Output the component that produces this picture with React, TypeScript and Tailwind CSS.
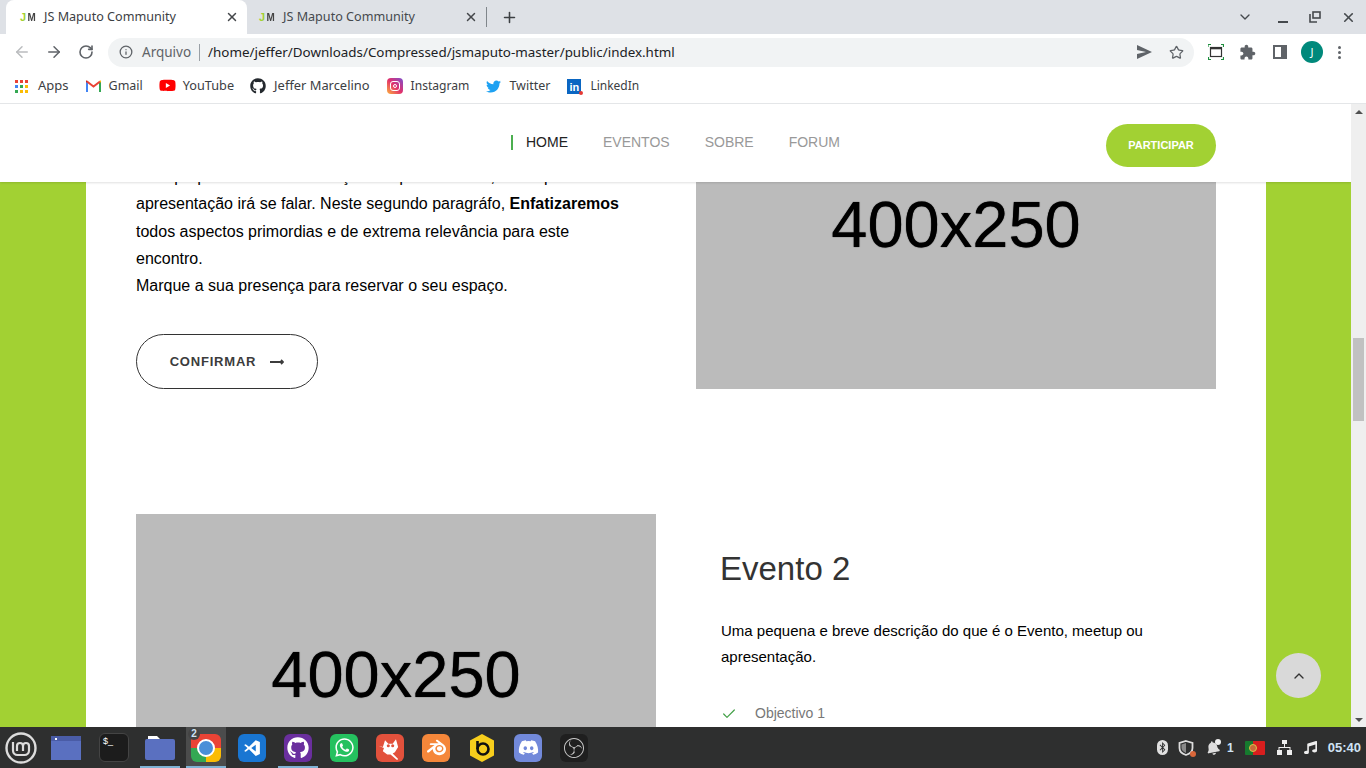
import { ArrowLeft, ArrowRight, RotateCw, Info, Star, ChevronDown, ChevronUp, X, Plus, Check } from "lucide-react";
import { FaGithub, FaYoutube, FaTwitter, FaWhatsapp, FaDiscord, FaBluetoothB, FaBell, FaMusic } from "react-icons/fa";
import { SiBlender, SiObsstudio } from "react-icons/si";

const sans = "font-['Liberation_Sans',Arial,sans-serif]";

function Favicon() {
  return (
    <span className={`flex w-4 shrink-0 gap-[1px] text-[11px] font-bold leading-none ${sans}`}>
      <span className="text-[#a2d133]">J</span>
      <span className="scale-x-90 text-[#444]">M</span>
    </span>
  );
}

function Tab({ active }: { active?: boolean }) {
  return (
    <div className={`flex h-[34px] w-[241px] items-center pl-[14px] pr-[8px] ${active ? "rounded-t-lg bg-white" : ""}`}>
      <Favicon />
      <span className={`ml-[8px] flex-1 text-[12.6px] ${active ? "text-[#3c4043]" : "text-[#45494d]"}`}>JS Maputo Community</span>
      <X size={14} strokeWidth={2.5} className="text-[#44474a]" />
    </div>
  );
}

function TabStrip() {
  return (
    <div className="flex h-[34px] items-center bg-[#dee1e6] pl-[6px] text-[#45494d]">
      <Tab active />
      <div className="-ml-[2px]"><Tab /></div>
      <div className="h-5 w-px bg-[#80868b]" />
      <Plus size={17} strokeWidth={2.2} className="ml-[14px] text-[#3c4043]" />
      <div className="flex-1" />
      <ChevronDown size={16} strokeWidth={2} className="mr-[25px]" />
      <span className="mr-[21px] mt-[9px] h-[2px] w-[10px] bg-[#45494d]" />
      <svg width="12" height="12" viewBox="0 0 12 12" className="mr-[20px]" fill="none" stroke="currentColor" strokeWidth="1.6">
        <rect x="4" y="1" width="7" height="6" />
        <path d="M1 3v8h7" />
      </svg>
      <X size={15} strokeWidth={2.6} className="mr-[10px]" />
    </div>
  );
}

function Toolbar() {
  return (
    <div className="flex h-[36px] items-center bg-white pl-[13px] text-[#5f6368]">
      <ArrowLeft size={18} className="text-[#babcbe]" />
      <ArrowRight size={18} className="ml-[14px]" />
      <RotateCw size={16} strokeWidth={2.4} className="ml-[15px]" />
      <div className="ml-[14px] flex h-[29px] w-[1086px] items-center rounded-full bg-[#f1f3f4] pl-[11px] pr-[10px]">
        <Info size={14} strokeWidth={2.2} />
        <span className="ml-[9px] text-[13.5px] text-[#5f6368]">Arquivo</span>
        <div className="mx-[8px] h-[17px] w-px bg-[#9aa0a6]" />
        <span className="flex-1 text-[13.4px] text-[#202124]">/home/jeffer/Downloads/Compressed/jsmaputo-master/public/index.html</span>
        <svg width="15" height="14" viewBox="0 0 15 14" className="mr-[17px]" fill="currentColor">
          <path d="M0 0l15 7-15 7V9l9-2-9-2z" />
        </svg>
        <Star size={15} strokeWidth={2} />
      </div>
      <svg width="16" height="16" viewBox="0 0 16 16" className="ml-[14px]" fill="none">
        <path d="M0 3V.5h3M13 .5h2.5V3M15.5 13v2.500H13M3 15.500H.5V13" stroke="#1e8e3e" strokeWidth="1.2" />
        <rect x="2.500" y="3.500" width="11" height="9" stroke="#333" strokeWidth="1.2" />
        <path d="M2.500 4.500h11" stroke="#333" strokeWidth="1.6" />
      </svg>
      <svg width="17" height="17" viewBox="0 0 24 24" className="ml-[15px]" fill="currentColor">
        <path d="M20.500 11H19V7c0-1.100-.9-2-2-2h-4V3.500C13 2.120 11.880 1 10.500 1S8 2.120 8 3.500V5H4c-1.100 0-1.990.9-1.990 2v3.800H3.500c1.490 0 2.700 1.210 2.700 2.700s-1.210 2.700-2.700 2.700H2V20c0 1.100.9 2 2 2h3.800v-1.500c0-1.490 1.210-2.700 2.700-2.700 1.490 0 2.700 1.210 2.700 2.700V22H17c1.100 0 2-.9 2-2v-4h1.500c1.380 0 2.500-1.120 2.500-2.500S21.880 11 20.500 11z" />
      </svg>
      <svg width="14" height="14" viewBox="0 0 14 14" className="ml-[17px]" fill="none">
        <rect x="1" y="1" width="12" height="12" stroke="currentColor" strokeWidth="2" />
        <rect x="8" y="1" width="5" height="12" fill="currentColor" />
      </svg>
      <div className="ml-[14px] flex h-[22px] w-[22px] items-center justify-center rounded-full bg-[#00897b] text-[11px] text-white">J</div>
      <div className="ml-[15px] flex flex-col gap-[2px]">
        <span className="h-[3px] w-[3px] rounded-full bg-[#5f6368]" />
        <span className="h-[3px] w-[3px] rounded-full bg-[#5f6368]" />
        <span className="h-[3px] w-[3px] rounded-full bg-[#5f6368]" />
      </div>
    </div>
  );
}

function AppsGrid() {
  const colors = ["#ea4335", "#ea4335", "#ea4335", "#4285f4", "#34a853", "#fbbc04", "#34a853", "#fbbc04", "#fbbc04"];
  return (
    <div className="grid w-[13px] grid-cols-3 gap-[2px]">
      {colors.map((c, i) => (
        <span key={i} className="h-[3px] w-[3px]" style={{ backgroundColor: c }} />
      ))}
    </div>
  );
}

function GmailIcon() {
  return (
    <svg width="15" height="12" viewBox="0 0 15 12" fill="none">
      <path d="M1 12V2" stroke="#4285f4" strokeWidth="2" />
      <path d="M14 12V2" stroke="#34a853" strokeWidth="2" />
      <path d="M1 1.500l6.500 5 6.500-5" stroke="#ea4335" strokeWidth="2" />
      <path d="M0 1l1 .8" stroke="#c5221f" strokeWidth="2" />
      <path d="M14 1.800l1-.8" stroke="#fbbc04" strokeWidth="2" />
    </svg>
  );
}

function InstagramIcon() {
  return (
    <div className="flex h-[16px] w-[16px] items-center justify-center rounded-[4px] bg-[linear-gradient(45deg,#fdb13c,#e1306c_50%,#7b4fd0)]">
      <div className="flex h-[10px] w-[10px] items-center justify-center rounded-[3px] border border-white">
        <span className="h-[4px] w-[4px] rounded-full border border-white" />
      </div>
    </div>
  );
}

function LinkedinIcon() {
  return (
    <div className={`relative flex h-[15px] w-[14px] items-end justify-center bg-[#0a66c2] text-[11px] font-bold leading-[13px] text-white ${sans}`}>
      in
      <span className="absolute -bottom-[1px] -right-[2px] h-[4px] w-[4px] rounded-full bg-[#e53935]" />
    </div>
  );
}

function Bookmarks() {
  return (
    <div className="flex h-[34px] items-center border-b border-[#e4e6e8] bg-white pb-[1px] pl-[15px] text-[12.5px] text-[#3c4043]">
      <div className="flex items-center gap-[10px]"><AppsGrid /><span className="text-[13px]">Apps</span></div>
      <div className="ml-[17px] flex items-center gap-[8px]"><GmailIcon /><span>Gmail</span></div>
      <div className="ml-[16px] flex items-center gap-[7px]"><FaYoutube size={17} className="text-[#ff0000]" /><span className="text-[12.7px]">YouTube</span></div>
      <div className="ml-[16px] flex items-center gap-[8px]"><FaGithub size={16} className="text-[#24292e]" /><span className="text-[12.9px]">Jeffer Marcelino</span></div>
      <div className="ml-[17px] flex items-center gap-[8px]"><InstagramIcon /><span className="text-[12.1px]">Instagram</span></div>
      <div className="ml-[17px] flex items-center gap-[8px]"><FaTwitter size={15} className="text-[#1da1f2]" /><span>Twitter</span></div>
      <div className="ml-[17px] flex items-center gap-[9px]"><LinkedinIcon /><span className="text-[12px]">LinkedIn</span></div>
    </div>
  );
}

function Placeholder() {
  return (
    <div className={`flex h-[325px] w-[520px] shrink-0 items-center justify-center bg-[#bbbbbb] text-[65px] text-black ${sans}`}>
      <span className="-mt-[4px] blur-[0.6px] [text-shadow:0_0_1px_#000]">400x250</span>
    </div>
  );
}

function NavHeader() {
  return (
    <div className={`absolute left-0 right-0 top-0 flex h-[78px] items-center bg-white shadow-[0_1px_2px_rgba(0,0,0,0.12)] ${sans}`}>
      <nav className="ml-[511px] flex items-center gap-[35px] pb-[1px] text-[14px] leading-[15px] text-[#999]">
        <span className="border-l-2 border-[#4caf50] pl-[13px] text-[#222]">HOME</span>
        <span>EVENTOS</span>
        <span>SOBRE</span>
        <span>FORUM</span>
      </nav>
      <button className="absolute left-[1106px] top-[20px] h-[43px] w-[110px] rounded-full bg-[#a2d133] text-[11px] font-bold text-white">PARTICIPAR</button>
    </div>
  );
}

function Content() {
  return (
    <div className={`ml-[86px] mr-[85px] -mt-[40px] h-[800px] bg-white px-[50px] ${sans}`}>
      <div className="flex justify-between">
        <div className="w-[500px] pt-[99.2px] text-[16px] leading-[27.2px] text-black">
          <p>
            Uma pequena e breve descrição do que é o Tema, meetup ou apresentação irá se falar. Neste segundo paragráfo, <b>Enfatizaremos</b> todos aspectos primordias e de extrema relevância para este encontro.<br />
            Marque a sua presença para reservar o seu espaço.
          </p>
          <button className="mt-[34.8px] flex h-[55px] w-[182px] items-center justify-center gap-[14px] rounded-full border border-[#333] bg-white text-[13px] font-bold tracking-[0.8px] text-[#3c3c3c]">
            CONFIRMAR
            <svg width="14" height="8" viewBox="0 0 14 8" fill="none" stroke="currentColor" strokeWidth="1.8">
              <path d="M0 4h13M11 2l2 2-2 2" />
            </svg>
          </button>
        </div>
        <Placeholder />
      </div>
      <div className="mt-[125px] flex">
        <Placeholder />
        <div className="ml-[65px] w-[440px]">
          <h2 className="-ml-[1px] mt-[35px] text-[33px] leading-[40px] text-[#333]">Evento 2</h2>
          <p className="mt-[29px] text-[15px] leading-[25.5px] text-black">
            Uma pequena e breve descrição do que é o Evento, meetup ou apresentação.
          </p>
          <div className="mt-[34px] flex items-center text-[14px] text-[#777]">
            <Check size={16} strokeWidth={1.8} className="text-[#43a047]" />
            <span className="ml-[18px]">Objectivo 1</span>
          </div>
        </div>
      </div>
    </div>
  );
}

function Scrollbar() {
  return (
    <div className="relative flex w-[15px] shrink-0 flex-col justify-between bg-[#efefef]">
      <div className="flex h-[15px] items-center justify-center">
        <span className="border-x-4 border-b-4 border-x-transparent border-b-[#505050]" />
      </div>
      <div className="absolute left-[2px] top-[234px] h-[83px] w-[11px] bg-[#c1c1c1]" />
      <div className="flex h-[15px] items-center justify-center">
        <span className="border-x-4 border-t-4 border-x-transparent border-t-[#505050]" />
      </div>
    </div>
  );
}

function Page() {
  return (
    <div className="flex h-[623px]">
      <div className="relative flex-1 overflow-hidden bg-[#a2d133]">
        <Content />
        <NavHeader />
        <div className="absolute left-[1276px] top-[549px] flex h-[45px] w-[45px] items-center justify-center rounded-full bg-[#d9d9d9] text-[#333]">
          <ChevronUp size={16} />
        </div>
      </div>
      <Scrollbar />
    </div>
  );
}

function Tile({ bg, children }: { bg: string; children?: React.ReactNode }) {
  return (
    <div className="flex h-[28px] w-[28px] items-center justify-center rounded-[6px] text-white" style={{ backgroundColor: bg }}>
      {children}
    </div>
  );
}

// one launcher slot of the panel, 40 wide with a 6 gap
function Dock({ children, mark, active }: { children?: React.ReactNode; mark?: boolean; active?: boolean }) {
  return (
    <div className={`relative flex h-[41px] w-[40px] shrink-0 items-center justify-center ${active ? "bg-[#4b4c4c]" : ""}`}>
      {children}
      {mark && <span className="absolute bottom-0 left-0 h-[2px] w-full bg-[#7fb3d5]" />}
    </div>
  );
}

function MintLogo() {
  return (
    <svg width="32" height="32" viewBox="0 0 32 32" fill="none" stroke="#dcdcdc">
      <circle cx="16" cy="16" r="14.500" strokeWidth="2.400" />
      <path d="M8 10v8.500a4.500 4.500 0 0 0 4.500 4.500h7a4.500 4.500 0 0 0 4.500-4.500V14a3 3 0 0 0-6 0v5M18 14a3 3 0 0 0-6 0v5" strokeWidth="2.200" />
    </svg>
  );
}

function WindowsIcon() {
  return (
    <svg width="30" height="24" viewBox="0 0 30 24" className="-ml-[4px]">
      <rect width="30" height="24" fill="#5a70c0" />
      <rect width="30" height="5" fill="#4a5ca6" />
      <rect x="4" y="2" width="2" height="2" fill="#fff" />
    </svg>
  );
}

function FolderIcon() {
  return (
    <svg width="30" height="24" viewBox="0 0 30 24">
      <path d="M3 0h9l3 3H3z" fill="#fff" />
      <path d="M0 5a2 2 0 0 1 2-2h26a2 2 0 0 1 2 2v17a2 2 0 0 1-2 2H2a2 2 0 0 1-2-2z" fill="#5a70c0" />
    </svg>
  );
}

function ChromeIcon() {
  return (
    <div className="relative h-[28px] w-[30px] overflow-hidden rounded-[6px] bg-[conic-gradient(#ea4335_0_25%,#fbbc04_25%_50%,#34a853_50%_75%,#ea4335_75%)]">
      <span className="absolute left-[6px] top-[5px] h-[18px] w-[18px] rounded-full border-2 border-white bg-[#4a8fd8]" />
    </div>
  );
}

function VscodeIcon() {
  return (
    <svg width="18" height="18" viewBox="0 0 24 24" fill="#fff">
      <path d="M17 1.500L8 10.300 3.600 7 1.500 8.100 6 12l-4.500 3.900L3.600 17 8 13.700l9 8.800 5.500-2.400V3.900zM17 7.500v9L11 12z" fillRule="evenodd" />
    </svg>
  );
}

function GimpIcon() {
  return (
    <svg width="25" height="24" viewBox="0 0 22 22" fill="#fff">
      <path d="M0 9l4 1 2-6 3 3h4l3-4 2 7-3 5-2 1 5 5-1 1-6-5H8l-4-3 1-3z" />
      <circle cx="9" cy="9" r="1.400" fill="#e2513c" />
      <circle cx="13" cy="9" r="1.400" fill="#e2513c" />
    </svg>
  );
}

function BeeIcon() {
  return (
    <svg width="26" height="28" viewBox="0 0 26 28">
      <path d="M13 0l12 6.500v15L13 28 1 21.500v-15z" fill="#f7ce1c" />
      <circle cx="14" cy="15" r="5.500" fill="none" stroke="#111" strokeWidth="2.600" />
      <path d="M8.500 7v8" stroke="#111" strokeWidth="2.600" />
    </svg>
  );
}

function ShieldIcon() {
  return (
    <div className="relative">
      <svg width="16" height="16" viewBox="0 0 16 16" fill="none">
        <path d="M8 1l6.500 2v5c0 3.500-3 6-6.500 7-3.500-1-6.500-3.500-6.500-7V3z" stroke="#ddd" strokeWidth="1.800" />
        <path d="M8 3v10c-2.500-1-4.500-2.800-4.500-5V4.500z" fill="#888" />
      </svg>
      <span className="absolute -bottom-[1px] -right-[2px] h-[6px] w-[6px] rounded-full bg-[#d9673a]" />
    </div>
  );
}

function NetworkIcon() {
  return (
    <svg width="15" height="15" viewBox="0 0 15 15" fill="#eee">
      <rect x="5" y="0" width="5" height="4" />
      <rect x="0" y="10" width="5" height="5" />
      <rect x="10" y="10" width="5" height="5" />
      <path d="M7 4h1v3h5.500v3h-1V8h-10v2h-1V7H7z" />
    </svg>
  );
}

function Taskbar() {
  return (
    <div className="flex h-[41px] items-center bg-[#2e2f2f] pl-[5px] text-white">
      <MintLogo />
      <div className="ml-[11px] flex gap-[6px]">
        <Dock><WindowsIcon /></Dock>
        <Dock>
          <div className="flex h-[29px] w-[30px] rounded-[6px] border border-[#444] bg-[#1c1c1c] pl-[3px] pt-[3px]">
            <span className={`text-[9px] leading-none ${sans}`}>$_</span>
          </div>
        </Dock>
        <Dock mark><FolderIcon /></Dock>
        <Dock mark active>
          <ChromeIcon />
          <span className={`absolute left-[2px] top-[1px] flex h-[12px] w-[12px] items-center justify-center rounded-full bg-[#444] text-[10px] font-bold leading-none text-[#cfe3f5] ${sans}`}>2</span>
        </Dock>
        <Dock><Tile bg="#1976d2"><VscodeIcon /></Tile></Dock>
        <Dock mark><Tile bg="#6a2f9e"><FaGithub size={22} /></Tile></Dock>
        <Dock><Tile bg="#25c15f"><FaWhatsapp size={21} /></Tile></Dock>
        <Dock><Tile bg="#e2513c"><GimpIcon /></Tile></Dock>
        <Dock><Tile bg="#f5873a"><SiBlender size={19} /></Tile></Dock>
        <Dock><BeeIcon /></Dock>
        <Dock><Tile bg="#7289da"><FaDiscord size={21} /></Tile></Dock>
        <Dock><Tile bg="#1f1f1f"><SiObsstudio size={20} className="text-[#ccc]" /></Tile></Dock>
      </div>
      <div className="flex-1" />
      <div className={`flex items-center pr-[5px] text-[12px] font-bold text-[#cfe3f5] ${sans}`}>
        <div className="flex h-[15px] w-[11px] items-center justify-center rounded-full bg-[#e0e0e0] text-[#2e2f2f]"><FaBluetoothB size={11} /></div>
        <div className="ml-[10px]"><ShieldIcon /></div>
        <div className="relative ml-[12px]">
          <FaBell size={14} className="-rotate-12 text-[#ddd]" />
          <span className="absolute -right-[1px] -top-[2px] h-[6px] w-[6px] rounded-full bg-[#eee]" />
        </div>
        <span className="ml-[7px]">1</span>
        <div className="relative ml-[11px] h-[14px] w-[20px] rounded-[1px] bg-[linear-gradient(90deg,#167a2e_40%,#d81e1e_40%)]">
          <span className="absolute left-[4px] top-[3px] h-[8px] w-[8px] rounded-full border border-[#d9c24a] bg-[#c86a3a]" />
        </div>
        <div className="ml-[12px]"><NetworkIcon /></div>
        <FaMusic size={13} className="ml-[12px] text-[#eee]" />
        <span className="ml-[11px] text-[13px]">05:40</span>
      </div>
    </div>
  );
}

export default function App() {
  return (
    <div className="flex h-[768px] w-[1366px] flex-col overflow-hidden font-['Noto_Sans',sans-serif]">
      <TabStrip />
      <Toolbar />
      <Bookmarks />
      <Page />
      <Taskbar />
    </div>
  );
}
